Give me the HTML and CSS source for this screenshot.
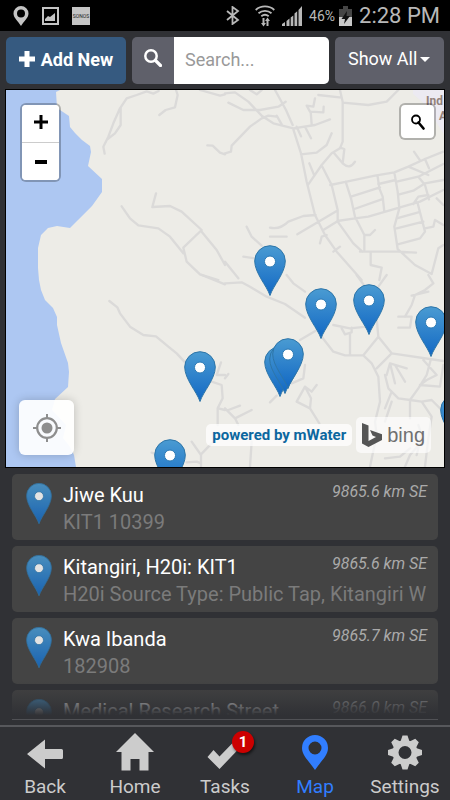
FILE: index.html
```html
<!DOCTYPE html>
<html lang="en">
<head>
<meta charset="utf-8">
<meta name="viewport" content="width=device-width, initial-scale=1">
<title>Map</title>
<link rel="stylesheet" href="styles.css">
</head>
<body>
<svg class="defs" aria-hidden="true">
  <defs>
    <linearGradient id="pin-fill" x1="0" y1="0" x2="0" y2="1">
      <stop offset="0" stop-color="#4a9bd2"/>
      <stop offset="1" stop-color="#1268c4"/>
    </linearGradient>
    <symbol id="pin" viewBox="0 0 32 51" overflow="visible">
      <path d="M16 50.500C13 41 .7 28 .7 16a15.300 15.300 0 0 1 30.600 0C31.300 28 19 41 16 50.500z" fill="url(#pin-fill)" stroke="#2d75a8" stroke-width="1"/>
      <circle cx="16" cy="16.500" r="5.500" fill="#fff" stroke="#2c7ab4" stroke-width="1"/>
    </symbol>
  </defs>
</svg>

<header class="status">
  <div class="status-group">
    <svg width="16" height="20" viewBox="0 0 16 20"><path d="M8 0a7.500 7.500 0 0 0-7.500 7.500C.5 12 5 15 8 20c3-5 7.500-8 7.500-12.500A7.500 7.500 0 0 0 8 0zm0 3.500a4 4 0 1 1 0 8 4 4 0 0 1 0-8z" fill="#c4c4c4" fill-rule="evenodd"/></svg>
    <svg width="17" height="18" viewBox="0 0 17 18"><path d="M1 1h15v16H1z" fill="none" stroke="#c4c4c4" stroke-width="2"/><path d="M3 14V12l3-3 2 1 5-4v8z" fill="#c4c4c4"/></svg>
    <span class="sonos">SONOS</span>
  </div>
  <div class="status-group status-right">
    <svg width="14" height="19" viewBox="0 0 14 19"><path d="M1 5l11 9-5.500 4V1L12 5 1 14" fill="none" stroke="#b8b8b8" stroke-width="1.800"/></svg>
    <svg class="wifi" width="20" height="22" viewBox="0 0 20 22"><g fill="none" stroke="#b8b8b8" stroke-width="1.800"><path d="M.7 5a14 14 0 0 1 18.600 0M3.500 8.200a10 10 0 0 1 13 0M6.300 11.200a6 6 0 0 1 7.400 0"/></g><path d="M6 18h1.500v-5h2v5H11l-2.500 3.500zM10 16l2.500-3.500L15 16h-1.500v5h-2v-5z" fill="#b8b8b8"/></svg>
    <svg width="20" height="20" viewBox="0 0 20 20"><path d="M0 20v-2l3-2v4zM4.500 20v-5l3-2.500V20zM8.700 20v-8.500l2.600-2V20zM12.500 20V7.500l2.700-2.300V20zM16.500 20V4L20 0v20z" fill="#b8b8b8"/></svg>
    <span class="battery-text">46%</span>
    <svg class="battery" width="13" height="20" viewBox="0 0 13 20"><path d="M0 3h4V0h5v3h4v17H0z" fill="#464646"/><path d="M0 11h13v9H0z" fill="#c8c8c8"/><path d="M8 5L2.500 13H6l-1 5 6-8H7.500z" fill="#111"/></svg>
    <time class="clock">2:28 PM</time>
  </div>
</header>

<div class="toolbar">
  <button class="btn btn-primary" type="button">
    <svg width="16" height="16" viewBox="0 0 16 16"><path d="M5.500 0h5v5.500H16v5h-5.500V16h-5v-5.500H0v-5h5.500z" fill="#fff"/></svg>
    Add New
  </button>
  <div class="search">
    <label class="search-icon" for="search" aria-label="Search">
      <svg width="18" height="18" viewBox="0 0 18 18"><circle cx="7" cy="7" r="5.700" fill="none" stroke="#fff" stroke-width="2.500"/><path d="M11.500 11.500l5 5" stroke="#fff" stroke-width="3.200" stroke-linecap="round"/></svg>
    </label>
    <input id="search" type="text" placeholder="Search...">
  </div>
  <div class="filter">
    <select aria-label="Filter"><option>Show All</option></select>
  </div>
</div>

<main class="map">
  <svg class="map-canvas" viewBox="6 90 438 377" preserveAspectRatio="xMidYMid slice">
    <path d="M6 90h438v377H6z" fill="#edece7"/>
    <path d="M6 90H60L56 92 57 108 69 116 70 127 75 133 82 140 90 146 91 152 88 166 102 179V192L92 206 78 220 70 228 57 226 48 228 41 235 38 248V268L39 280 41 290 45 300 53 308 57 317V325L61 343 68 363 69 372 68 387 55 399 52 410 66 425 63 438 70 447 74 455 76 467H6z" fill="#adc7f2"/>
    <path d="M413 90h31v44l-6-9-12-20-13-11z" fill="#eceaf2"/>
    <g class="roads" transform="translate(0 85) scale(.33333)">
      <path d="M476 18L460 26 440 19 410 30 380 40 360 70 340 115 325 155 310 185 314 206M362 68V120L345 145 323 162M478 90L497 75 525 67 533 30 528 15M600 15L660 32 675 28M622 181L638 182 660 203 675 208M468 325L457 366 510 363 545 380 605 435 550 488 560 530 600 568 655 585M365 364L390 400 415 421 475 430 510 455 550 505M605 440L650 495 675 540"/>
    </g>
    <g class="roads" transform="translate(225 85) scale(.33333)">
      <path d="M0 25L30 22 70 50 110 92 145 115 205 130 270 120 315 103M10 53L55 75 105 75 160 65 182 50M150 15L183 75 203 120M75 15L95 28 110 15M0 205L18 200 20 182 75 125 110 100 130 92 155 95M155 92L170 118M204 130L228 205 245 290 270 390 300 450 335 500 410 585M228 208L275 203 305 180 320 145M215 125L228 154M240 125L258 160M270 40L265 65 245 62 255 80 295 82 296 65M257 80L260 118M280 30L350 38M345 15L353 50V170L345 190 320 205 290 240 250 298M353 53L430 60 485 50 520 15M345 188L358 192 353 235 325 202M353 235Q375 255 390 230M253 235L268 272M292 245L320 300 338 375V410L385 475 412 500M316 300L365 290 450 272 508 262 550 245 600 222 655 200M362 290L378 340 390 395 418 450V495M378 335L465 307M388 372L470 343M458 275L463 310 473 335 478 380M460 297L512 285M508 262L518 320 523 370 508 425 518 492M523 328L565 317 600 295 655 285M515 290L580 275 655 237M550 245L610 270M600 222L612 250M567 200L585 226M580 275L600 300 612 343M565 357L580 335 610 330M337 408L390 400 430 395 525 367 585 350 655 315M635 340L655 360M217 448L335 378M135 428Q165 435 190 410L235 393 272 390M295 435L335 410M515 400L580 382M515 430L595 410M578 355L600 440 585 460 518 478M600 430L625 425 630 405 655 420M418 450L435 450 450 435M405 500H518L573 503M518 492L570 540 620 567 640 490 655 480M437 500V540L470 548 463 585M65 425L80 455 110 482M135 455L185 455M55 515L90 520M285 475L290 455 305 450M325 500L345 485M0 530L40 580"/>
    </g>
    <g class="roads" transform="translate(0 275) scale(.33333)">
      <path d="M328 78L352 97 360 115 390 155 430 180 468 184 505 215 530 235 558 265M605 0L675 28M663 262L650 300 675 300M635 320L665 330 668 370 653 400V450M655 400L675 405M575 500L603 540V575M603 538L640 500M560 562L590 560 603 565M455 533L475 540"/>
    </g>
    <g class="roads" transform="translate(225 275) scale(.33333)">
      <path d="M0 25L50 22 75 35 125 65 180 87 240 128M185 0L205 25 240 50M395 0L420 35M485 0L460 35M325 150L375 160 425 155M350 160L360 178 380 172 380 158M375 175V240M290 185L325 230 360 241H415L460 185 455 130M415 241L440 265 460 305 465 380 450 440 455 480 435 575M460 185L500 235 655 258M500 235L455 280M225 195L285 160M610 0L625 25 600 45 570 60 560 90 540 125M560 62L610 50M520 125H560L555 158H520M595 255L635 300 605 315 585 330M617 255L605 300 580 340 555 375 520 370 490 340 480 300M485 300L495 265 545 280M495 265L510 325M510 270L540 320M585 330L645 335 655 270M555 375L590 380 620 425 610 490 600 575M590 380L620 375 655 410M500 350L480 400M500 380L480 440M555 375V430M575 540L590 480 580 450M480 550L525 545 555 520M540 575L555 540 590 500M80 500L75 575M215 380L255 400 283 445M215 380L240 335 260 350 275 330M240 270L235 310 200 325M240 335L258 370 255 400M135 382L155 362M0 310L10 297M0 400L30 430 80 405M10 405L45 392M30 430L40 450"/>
    </g>
    <g class="place"><text x="426" y="105">Ind</text><text x="439" y="120">A</text></g>
    <g>
      <use href="#pin" x="254" y="245" width="32" height="51"/>
      <use href="#pin" x="305" y="288" width="32" height="51"/>
      <use href="#pin" x="353" y="284" width="32" height="51"/>
      <use href="#pin" x="415" y="306" width="32" height="51"/>
      <use href="#pin" x="184" y="351" width="32" height="51"/>
      <use href="#pin" x="154" y="439" width="32" height="51"/>
      <use href="#pin" x="440" y="394" width="32" height="51"/>
      <use href="#pin" x="264" y="346" width="32" height="51"/>
      <use href="#pin" x="269" y="343" width="32" height="51"/>
      <use href="#pin" x="272" y="338" width="32" height="51"/>
    </g>
  </svg>
  <div class="zoom">
    <button type="button" aria-label="Zoom in"><svg width="14" height="14" viewBox="0 0 14 14"><path d="M0 7h14M7 0v14" stroke="#000" stroke-width="3"/></svg></button>
    <button type="button" aria-label="Zoom out"><svg width="12" height="14" viewBox="0 0 12 14"><path d="M0 7h12" stroke="#000" stroke-width="4"/></svg></button>
  </div>
  <button class="map-search" type="button" aria-label="Search map"><svg width="14" height="16" viewBox="0 0 14 16"><circle cx="5" cy="5.500" r="4" fill="none" stroke="#000" stroke-width="1.800"/><path d="M7.500 8.500l5 6" stroke="#000" stroke-width="2.600" stroke-linecap="round"/></svg></button>
  <button class="locate" type="button" aria-label="My location"><svg width="28" height="28" viewBox="0 0 28 28"><circle cx="14" cy="14" r="9.800" fill="none" stroke="#8e8e8e" stroke-width="2.200"/><circle cx="14" cy="14" r="5.500" fill="#8e8e8e"/><path d="M14 0v5M14 23v5M0 14h5M23 14h5" stroke="#8e8e8e" stroke-width="2"/></svg></button>
  <div class="credits">
    <a class="powered" href="#">powered by mWater</a>
    <div class="bing"><svg width="20" height="24" viewBox="0 0 20 24"><path d="M0 0l6.500 2.500V18L14 14 10.500 12.500 8 7l12 4.300V17L6.500 24 0 20.500z" fill="#555"/></svg><span>bing</span></div>
  </div>
</main>

<section class="list">
  <article class="card"><svg class="card-pin" viewBox="0 0 32 51"><use href="#pin" width="32" height="51"/></svg><h2>Jiwe Kuu</h2><span class="distance">9865.6 km SE</span><p>KIT1 10399</p></article>
  <article class="card"><svg class="card-pin" viewBox="0 0 32 51"><use href="#pin" width="32" height="51"/></svg><h2>Kitangiri, H20i: KIT1</h2><span class="distance">9865.6 km SE</span><p>H20i Source Type: Public Tap, Kitangiri W</p></article>
  <article class="card"><svg class="card-pin" viewBox="0 0 32 51"><use href="#pin" width="32" height="51"/></svg><h2>Kwa Ibanda</h2><span class="distance">9865.7 km SE</span><p>182908</p></article>
  <article class="card"><svg class="card-pin" viewBox="0 0 32 51"><use href="#pin" width="32" height="51"/></svg><h2>Medical Research Street</h2><span class="distance">9866.0 km SE</span></article>
</section>

<nav class="tabs">
  <a href="#"><svg width="36" height="38" viewBox="0 0 36 38"><path d="M0 21L18 6.500V16h16.500q1.500 0 1.500 1.500v7q0 1.500-1.500 1.500H18v9.500z" fill="#ccc"/></svg>Back</a>
  <a href="#"><svg width="38" height="38" viewBox="0 0 38 38"><path d="M19 0L38 19h-5.500v18.500h-9V26h-9v11.500h-9V19H0z" fill="#ccc"/></svg>Home</a>
  <a href="#"><span class="badge-wrap"><svg width="36" height="38" viewBox="0 0 36 38"><path d="M6.500 17L12.500 23.500 28 7.500 34 13.500 12.500 36 .5 24z" fill="#ccc"/></svg><span class="badge">1</span></span>Tasks</a>
  <a class="active" href="#"><svg width="26" height="38" viewBox="0 0 26 38"><path d="M13 2A13 13 0 0 0 0 15C0 23 8 29 13 37 18 29 26 23 26 15A13 13 0 0 0 13 2zm0 6.500a6.500 6.500 0 1 1 0 13 6.500 6.500 0 0 1 0-13z" fill="#317eff" fill-rule="evenodd"/></svg>Map</a>
  <a href="#"><svg width="36" height="38" viewBox="-18 -19.500 36 38"><g fill="#ccc"><path d="M0-12.500A12.500 12.500 0 1 0 0 12.500 12.500 12.500 0 1 0 0-12.500zM0-6.500A6.500 6.500 0 1 1 0 6.500 6.500 6.500 0 1 1 0-6.500z" fill-rule="evenodd"/><g id="teeth"><path id="tooth" d="M-4.500-11L-2.500-17h5L4.500-11zM-4.500 11L-2.500 17h5L4.500 11z"/><use href="#tooth" transform="rotate(45)"/></g><use href="#teeth" transform="rotate(90)"/></g></svg>Settings</a>
</nav>
</body>
</html>
```
FILE: styles.css
```css
* { box-sizing: border-box; }

body {
  display: flex;
  flex-direction: column;
  height: 100vh;
  margin: 0;
  overflow: hidden;
  background: #303135;
  color: #fff;
  font-family: Roboto, "Liberation Sans", sans-serif;
  font-size: 18px;
}

button, input, select { font: inherit; }
button { margin: 0; padding: 0; border: 0; cursor: pointer; }
svg { flex: none; display: block; }
.defs { position: absolute; width: 0; height: 0; }

/* Status bar */
.status {
  display: flex;
  align-items: center;
  justify-content: space-between;
  height: 31px;
  padding: 0 10px 0 13px;
  background: #000;
  color: #b8b8b8;
}
.status-group { display: flex; align-items: center; gap: 13px; }
.status-right { gap: 7px; }
.sonos {
  width: 18px;
  height: 18px;
  background: #c4c4c4;
  color: #222;
  font-size: 5px;
  line-height: 18px;
  text-align: center;
}
.wifi { margin-left: 8px; }
.battery-text { font-size: 14px; margin-right: -3px; }
.clock { font-size: 22px; }

/* Toolbar */
.toolbar { display: flex; gap: 6px; padding: 6px; }
.btn, .search, .filter { height: 47px; border-radius: 5px; }
.btn {
  display: flex;
  align-items: center;
  justify-content: center;
  gap: 6px;
  width: 120px;
  padding-bottom: 3px;
  background: #365a80;
  color: #fff;
  font-weight: 700;
}
.search { display: flex; flex: 1; min-width: 0; overflow: hidden; background: #5f606a; }
.search-icon { display: flex; flex: none; align-items: center; width: 42px; padding: 0 0 6px 12px; }
.search input {
  flex: 1;
  min-width: 0;
  padding: 0 11px 3px;
  border: 0;
  outline: 0;
  background: #fff;
  color: #333;
}
.search input::placeholder { color: #999; opacity: 1; }
.filter { position: relative; width: 109px; background: #5f606a; }
.filter select {
  width: 100%;
  height: 100%;
  padding: 0 0 4px 13px;
  border: 0;
  appearance: none;
  background: transparent;
  color: #fff;
}
.filter::after {
  content: "";
  position: absolute;
  top: 20px;
  right: 14px;
  border: 5px solid transparent;
  border-top-color: #fff;
  border-bottom: 0;
  pointer-events: none;
}

/* Map */
.map {
  position: relative;
  flex: 1;
  min-height: 0;
  margin: 0 6px;
  overflow: hidden;
  outline: 1px solid #000;
}
.map-canvas { width: 100%; height: 100%; }
.roads { fill: none; stroke: #dbdad9; stroke-width: 7; stroke-linejoin: round; stroke-linecap: round; }
.place { fill: #93827c; font-size: 12px; font-weight: 700; }
.zoom, .map-search {
  position: absolute;
  top: 13px;
  border: 2px solid rgba(0, 0, 0, 0.25);
  border-radius: 6px;
  background: #fff;
  background-clip: padding-box;
}
.zoom { left: 14px; width: 41px; overflow: hidden; }
.zoom button {
  display: flex;
  align-items: center;
  justify-content: center;
  width: 100%;
  height: 37px;
  background: #fff;
}
.zoom button:first-child { height: 38px; padding-bottom: 4px; border-bottom: 1px solid #ccc; }
.map-search {
  display: flex;
  align-items: center;
  justify-content: center;
  right: 8px;
  width: 37px;
  height: 37px;
}
.locate {
  position: absolute;
  left: 13px;
  bottom: 12px;
  display: flex;
  align-items: center;
  justify-content: center;
  width: 55px;
  height: 55px;
  border-radius: 6px;
  background: rgba(255, 255, 255, 0.92);
  box-shadow: 0 0 10px rgba(0, 0, 0, 0.2);
}
.credits {
  position: absolute;
  right: 13px;
  bottom: 14px;
  display: flex;
  align-items: center;
  gap: 4px;
}
.powered {
  padding: 0 6px;
  border-radius: 5px;
  background: rgba(255, 255, 255, 0.75);
  color: #0c679f;
  font-size: 15px;
  font-weight: 700;
  line-height: 22px;
  text-decoration: none;
}
.bing {
  display: flex;
  align-items: center;
  gap: 5px;
  height: 36px;
  padding: 0 6px;
  border-radius: 5px;
  background: rgba(255, 255, 255, 0.65);
  color: #707070;
  font-family: "Liberation Sans", sans-serif;
  font-size: 20px;
}

/* Source list */
.list {
  position: relative;
  display: flex;
  flex: 0 0 253px;
  flex-direction: column;
  gap: 6px;
  margin: 0 12px 5px;
  padding-top: 7px;
  overflow: hidden;
  border-bottom: 1px solid #505155;
}
.list::after {
  content: "";
  position: absolute;
  right: 0;
  bottom: 0;
  left: 0;
  height: 38px;
  background: linear-gradient(rgba(48, 49, 53, 0), #303135 90%);
}
.card {
  display: grid;
  flex: none;
  grid-template-columns: 26px minmax(0, 1fr) auto;
  column-gap: 11px;
  align-content: start;
  height: 66px;
  padding: 8px 9px 0 14px;
  border-radius: 5px;
  background: #444;
}
.card-pin { grid-row: 1 / 3; width: 26px; height: 43px; opacity: 0.85; }
.card h2, .card p {
  margin: 0;
  overflow: hidden;
  font-size: 20px;
  font-weight: 400;
  line-height: 27px;
  white-space: nowrap;
}
.card p { grid-column: 2 / 4; color: #7b7b7b; }
.distance { padding-right: 2px; color: #aaa; font-size: 16px; font-style: italic; line-height: 20px; }

/* Bottom tabs */
.tabs {
  display: grid;
  flex: none;
  grid-template-columns: repeat(5, minmax(0, 1fr));
  border-top: 2px solid #57585c;
}
.tabs a {
  display: flex;
  flex-direction: column;
  align-items: center;
  gap: 3px;
  padding-top: 6px;
  color: #ccc;
  font-size: 19px;
  line-height: 26px;
  text-decoration: none;
}
.tabs a.active { color: #317eff; }
.badge-wrap { position: relative; }
.badge {
  position: absolute;
  top: -2px;
  right: -11px;
  width: 22px;
  height: 22px;
  border-radius: 50%;
  background: #c00;
  box-shadow: 1px 2px 3px rgba(0, 0, 0, 0.6);
  color: #fff;
  font-size: 15px;
  font-weight: 700;
  line-height: 22px;
  text-align: center;
}
```
